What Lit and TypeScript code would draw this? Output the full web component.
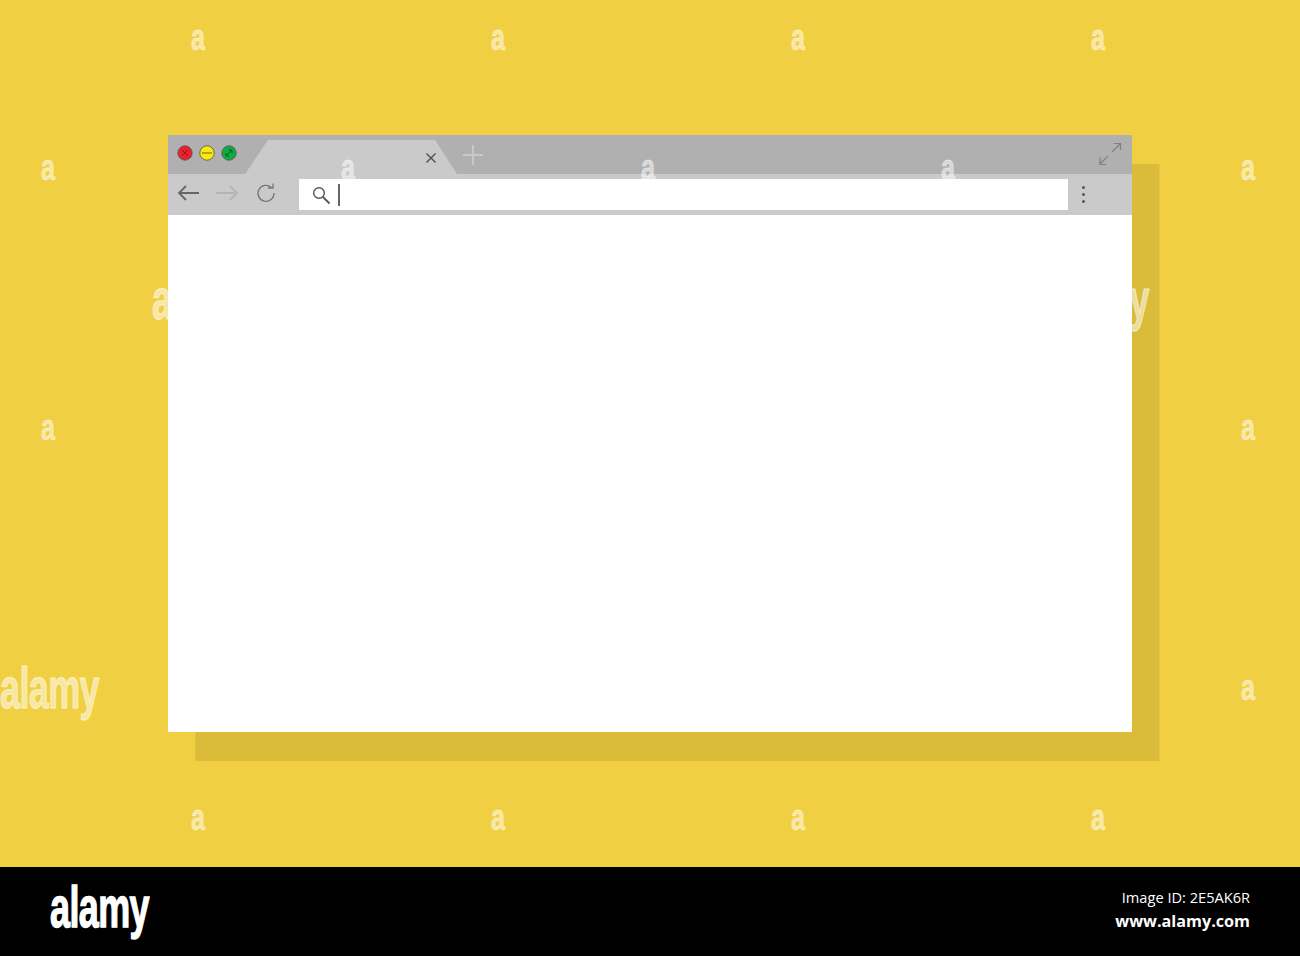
import { LitElement, html, css, svg } from "lit";
import { customElement } from "lit/decorators.js";

type Mark = { x: number; y: number; t: string };

const smallCols = [191, 491, 791, 1091];
const marks: Mark[] = [
  ...smallCols.map((x) => ({ x, y: 20, t: "a" })),
  ...smallCols.map((x) => ({ x, y: 800, t: "a" })),
  ...[41, 341, 641, 941, 1241].map((x) => ({ x, y: 150, t: "a" })),
  ...[41, 1241].map((x) => ({ x, y: 410, t: "a" })),
  { x: 1241, y: 670, t: "a" },
];
const bigMarks = [
  { x: 0, y: 656 },
  { x: 152, y: 267 },
  { x: 1050, y: 267 },
];

@customElement("app-root")
export class AppRoot extends LitElement {
  static styles = css`
    :host {
      display: block;
      position: relative;
      width: 1300px;
      height: 956px;
      overflow: hidden;
      background: #000;
    }
    .stage {
      height: 867px;
      box-sizing: border-box;
      padding: 135px 168px;
      background: #f1cf42;
    }
    .window {
      height: 597px;
      display: flex;
      flex-direction: column;
      background: #fff;
      box-shadow: 27.5px 29px 0 #dbbb3a;
    }
    .titlebar {
      height: 39px;
      flex: none;
      display: flex;
      align-items: flex-start;
      background: #b0b0b0;
      box-sizing: border-box;
      padding-right: 10px;
    }
    .lights {
      display: flex;
      gap: 6px;
      margin: 10px 0 0 9px;
    }
    .light {
      width: 16px;
      height: 16px;
      display: block;
    }
    .tab {
      width: 212px;
      height: 34px;
      margin: 5px 0 0 8px;
      flex: none;
      box-sizing: border-box;
      display: flex;
      justify-content: flex-end;
      background: #cacaca;
      clip-path: polygon(0 100%, 23px 0, 190px 0, 100% 100%);
      padding: 12px 20px 0 0;
    }
    .close {
      width: 12px;
      height: 12px;
      display: block;
    }
    .plus {
      width: 22px;
      height: 22px;
      margin: 9px 0 0 5px;
      display: block;
      flex: none;
    }
    .expand {
      width: 24px;
      height: 24px;
      margin: 7px 0 0 auto;
      display: block;
    }
    .toolbar {
      height: 41px;
      flex: none;
      box-sizing: border-box;
      display: flex;
      align-items: flex-start;
      padding: 5px 0 5px 9px;
      background: #cacaca;
    }
    .nav {
      width: 24px;
      height: 20px;
      margin-top: 4px;
      display: block;
      flex: none;
    }
    .nav + .nav {
      margin-left: 14px;
    }
    .address {
      width: 769px;
      height: 31px;
      margin-left: 22px;
      flex: none;
      display: flex;
      align-items: center;
      background: #fff;
      padding-left: 12px;
      box-sizing: border-box;
    }
    .search {
      width: 20px;
      height: 20px;
      display: block;
      flex: none;
    }
    .caret {
      width: 1.5px;
      height: 22px;
      margin-left: 7px;
      background: #666;
    }
    .menu {
      width: 4px;
      height: 17px;
      margin: 7px 0 0 14px;
      display: flex;
      flex-direction: column;
      justify-content: space-between;
    }
    .menu i {
      width: 3.4px;
      height: 3.4px;
      border-radius: 50%;
      background: #555;
    }
    .content {
      flex: 1;
      background: #fff;
    }
    .footer {
      height: 89px;
      box-sizing: border-box;
      display: flex;
      justify-content: space-between;
      padding: 8px 50px 0 50px;
      color: #fff;
    }
    .brand {
      font: 700 58px/64px "Liberation Sans", sans-serif;
      letter-spacing: -1px;
      transform: scaleX(0.62);
      transform-origin: left top;
      -webkit-text-stroke: 1.4px currentColor;
    }
    .meta {
      text-align: right;
      font-family: "Open Sans", sans-serif;
      font-size: 14.6px;
      line-height: 24px;
      padding-top: 10px;
    }
    .meta b {
      display: block;
      font-size: 16.2px;
    }
    .mark {
      position: absolute;
      color: rgba(255, 255, 255, 0.5);
      pointer-events: none;
      font: 700 36px/36px "Liberation Sans", sans-serif;
      transform: scaleX(0.7);
      transform-origin: left top;
      -webkit-text-stroke: 0.8px currentColor;
    }
    .mark.big {
      font-size: 58px;
      line-height: 64px;
      letter-spacing: -1px;
      transform: scaleX(0.62);
      -webkit-text-stroke: 1.4px currentColor;
    }
  `;

  private light(fill: string, glyph: unknown) {
    return html`<svg class="light" viewBox="0 0 16 16">
      <circle cx="8" cy="8" r="7.2" fill=${fill} stroke="#555" stroke-width="0.8"></circle>
      ${glyph}
    </svg>`;
  }

  render() {
    return html`
      <div class="stage">
        <div class="window">
          <div class="titlebar">
            <div class="lights">
              ${this.light("#e8202f", svg`<path d="M5 5l6 6M11 5l-6 6" stroke="#8a1c24" stroke-width="1" fill="none"/>`)}
              ${this.light("#f8ea10", svg`<path d="M3 8h10" stroke="#6b6410" stroke-width="1" fill="none"/>`)}
              ${this.light("#0fab3e", svg`<path d="M5 11l6-6M8 5h3v3M5 8v3h3" stroke="#0b5f25" stroke-width="1" fill="none"/>`)}
            </div>
            <div class="tab">
              <svg class="close" viewBox="0 0 12 12">
                <path d="M1.500 1.500l9 9M10.500 1.500l-9 9" stroke="#4d4d4d" stroke-width="1.400" fill="none"></path>
              </svg>
            </div>
            <svg class="plus" viewBox="0 0 22 22">
              <path d="M11 1v20M1 11h20" stroke="#c8c8c8" stroke-width="2" fill="none"></path>
            </svg>
            <svg class="expand" viewBox="0 0 24 24">
              <path d="M14 10l8-8M16 1.500h6.500V8M2 22l8-8M2 15.500V22.500H8.500" stroke="#808080" stroke-width="1.200" fill="none"></path>
            </svg>
          </div>
          <div class="toolbar">
            <svg class="nav" viewBox="0 0 24 20">
              <path d="M1.500 10h20.500M9 3l-7 7 7 7" stroke="#666" stroke-width="1.800" fill="none"></path>
            </svg>
            <svg class="nav" viewBox="0 0 24 20">
              <path d="M1 10h20.500M15 3l7 7-7 7" stroke="#b4b4b4" stroke-width="1.800" fill="none"></path>
            </svg>
            <svg class="nav" viewBox="0 0 24 20">
              <path d="M18.500 4.500A8 8 0 1 0 21 10" stroke="#777" stroke-width="1.300" fill="none"></path>
              <path d="M15 5h5V.5" stroke="#777" stroke-width="1.300" fill="none"></path>
            </svg>
            <div class="address">
              <svg class="search" viewBox="0 0 20 20">
                <circle cx="8" cy="8" r="5.300" stroke="#555" stroke-width="1.400" fill="none"></circle>
                <path d="M12 12l6.500 6.500" stroke="#555" stroke-width="1.800" fill="none"></path>
              </svg>
              <div class="caret"></div>
            </div>
            <div class="menu"><i></i><i></i><i></i></div>
          </div>
          <div class="content"></div>
        </div>
      </div>
      <div class="footer">
        <div class="brand">alamy</div>
        <div class="meta">Image ID: 2E5AK6R<b>www.alamy.com</b></div>
      </div>
      ${marks.map((m) => html`<div class="mark" style="left:${m.x}px;top:${m.y}px">${m.t}</div>`)}
      ${bigMarks.map((m) => html`<div class="mark big" style="left:${m.x}px;top:${m.y}px">alamy</div>`)}
    `;
  }
}
